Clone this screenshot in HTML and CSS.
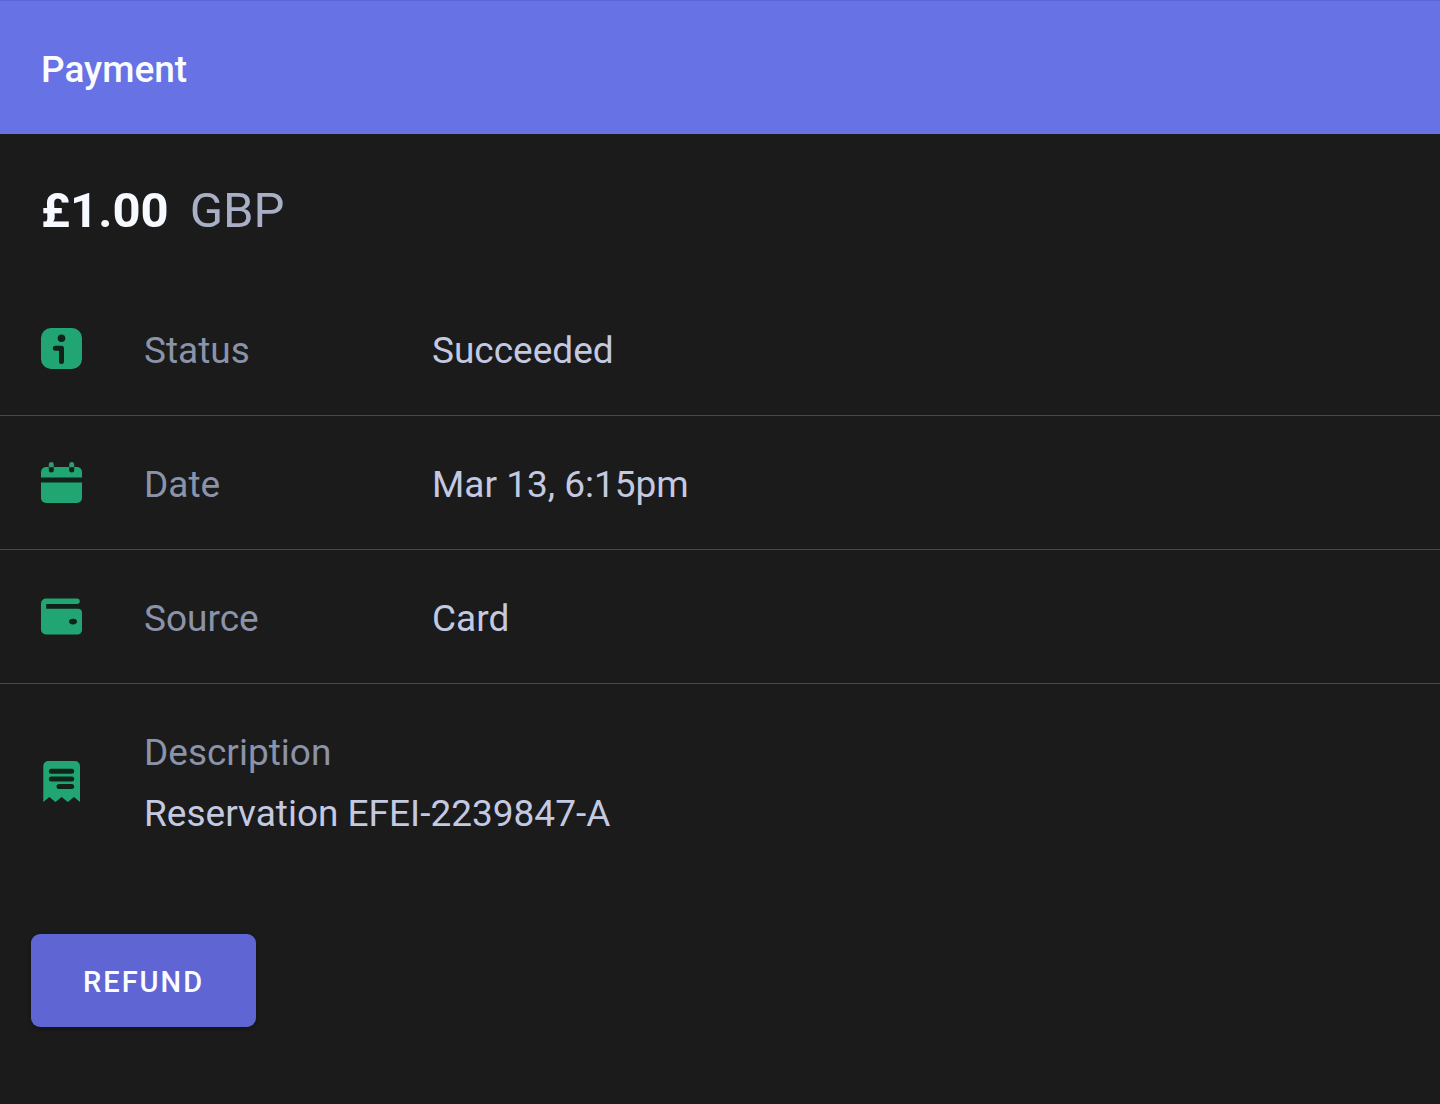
FILE: index.html
```html
<!DOCTYPE html>
<html lang="en">
<head>
    <meta charset="UTF-8">
    <meta name="viewport" content="width=device-width, initial-scale=1.0">
    <title>Payment</title>
    <link rel="stylesheet" href="styles.css">
</head>
<body>

    <!-- Header -->
    <header class="header">
        <h1>Payment</h1>
    </header>

    <main>
        <p class="amount"><strong>£1.00</strong> <span class="currency">GBP</span></p>

        <!-- Payment details -->
        <dl class="details">
            <div class="row">
                <svg class="icon" viewBox="0 0 41 41" aria-hidden="true">
                    <rect class="fill" width="41" height="41" rx="10"/>
                    <circle class="cut" cx="20.5" cy="10.3" r="3.8"/>
                    <path class="cut-line" d="M14.3 20.3H20.5V33.5"/>
                </svg>
                <dt>Status</dt>
                <dd>Succeeded</dd>
            </div>
            <div class="row">
                <svg class="icon" viewBox="0 0 41 41" aria-hidden="true">
                    <path class="cut" d="M0 14H41V22H0Z"/>
                    <path class="fill" d="M0 15.5V10A5 5 0 0 1 5 5H36A5 5 0 0 1 41 10V15.5Z"/>
                    <path class="fill" d="M0 20.5H41V36A5 5 0 0 1 36 41H5A5 5 0 0 1 0 36Z"/>
                    <path class="cut-line" d="M10.3 4V8M30.7 4V8"/>
                    <path class="tab" d="M7.8 5.2V2.5A2.5 2.5 0 0 1 12.8 2.5V5.2ZM28.2 5.2V2.5A2.5 2.5 0 0 1 33.2 2.5V5.2Z"/>
                </svg>
                <dt>Date</dt>
                <dd>Mar 13, 6:15pm</dd>
            </div>
            <div class="row">
                <svg class="icon" viewBox="0 0 41 41" aria-hidden="true">
                    <path class="cut" d="M4 6H37V15H4Z"/>
                    <path class="fill" d="M5 2.5H36A2.7 2.7 0 0 1 36 8H5.2V12.8H37A4 4 0 0 1 41 16.8V34A4.5 4.5 0 0 1 36.5 38.5H5A5 5 0 0 1 0 33.5V7.5A5 5 0 0 1 5 2.5Z"/>
                    <ellipse class="cut" cx="32" cy="25.6" rx="4" ry="2.8"/>
                </svg>
                <dt>Source</dt>
                <dd>Card</dd>
            </div>
            <div class="row row-stacked">
                <svg class="icon" viewBox="0 0 41 41" aria-hidden="true">
                    <path class="fill" d="M2.3 41V5A5 5 0 0 1 7.3 0H34A5 5 0 0 1 39 5V41L33 36L26.8 41L20.6 36L14.5 41L8.4 36Z"/>
                    <path class="cut-line" d="M10.3 10.3H30.7M10.3 18H30.7M18 25.6H30.7"/>
                </svg>
                <div class="stack">
                    <dt>Description</dt>
                    <dd>Reservation EFEI-2239847-A</dd>
                </div>
            </div>
        </dl>

        <button type="button" class="refund-btn">REFUND</button>
    </main>

</body>
</html>
```

FILE: styles.css
```css
/* General Styles */
* {
    box-sizing: border-box;
}

body {
    margin: 0;
    min-height: 100vh;
    background: #1b1b1b;
    color: #c4c9e2;
    font-family: Roboto, sans-serif;
    font-size: 37px;
    line-height: 61px;
}

h1, p, dl, dt, dd {
    margin: 0;
}

/* Header */
.header {
    padding: 39px 41px 34px;
    background: #6772e5;
    border-top: 1px solid #5c67d5;
}

h1 {
    color: #fbfcff;
    font-size: 37px;
    font-weight: 500;
    line-height: 60px;
}

/* Amount */
.amount {
    display: flex;
    gap: 21px;
    padding: 47px 41px 41px;
    font-size: 49px;
    line-height: 60px;
}

.amount strong {
    color: #f6f9ff;
    font-weight: 700;
}

.currency {
    color: #a9afc7;
}

/* Payment details */
.row {
    display: flex;
    align-items: center;
    padding: 34px 41px;
    border-bottom: 1px solid #45484f;
}

.row dt,
.row dd {
    padding-top: 4px;
}

.row dt {
    width: 288px;
    color: #8b93a9;
}

.row-stacked {
    border-bottom: none;
}

.row-stacked dd {
    padding-top: 0;
}

.icon {
    flex: none;
    width: 41px;
    height: 41px;
    margin-right: 62px;
}

.fill {
    fill: #21a673;
}

.tab {
    fill: #309a70;
}

.cut {
    fill: #10231b;
}

.cut-line {
    fill: none;
    stroke: #10231b;
    stroke-width: 5;
    stroke-linecap: round;
    stroke-linejoin: round;
}

/* Refund button */
.refund-btn {
    margin: 56px 31px;
    padding: 18px 52px 15px;
    background: #6065d4;
    color: #fbfcff;
    border: none;
    border-radius: 9px;
    box-shadow: 0 2px 4px rgba(0, 0, 0, 0.3);
    font-family: inherit;
    font-size: 29px;
    font-weight: 500;
    line-height: 60px;
    letter-spacing: 2px;
    cursor: pointer;
}

.refund-btn:hover {
    background: #6772e5;
}
```
